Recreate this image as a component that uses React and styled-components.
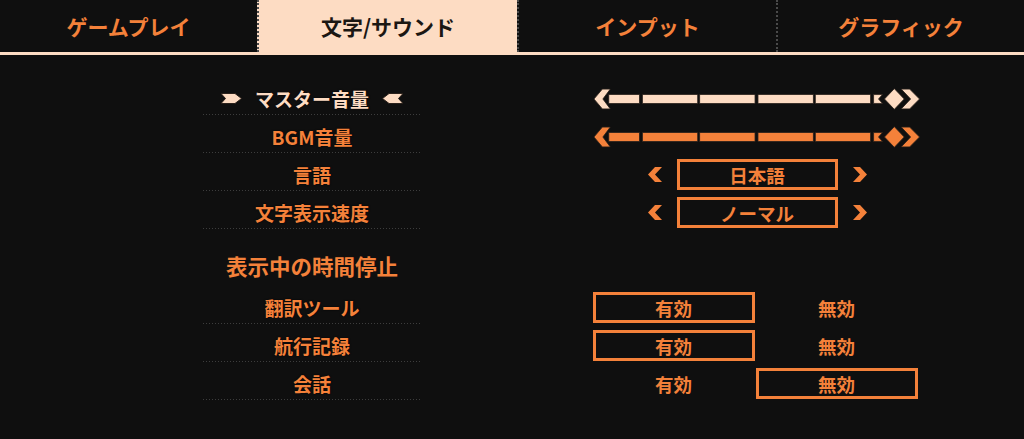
import React from "react";
import styled, { createGlobalStyle } from "styled-components";

const ORANGE = "#f4813a";
const PEACH = "#fddcc3";
const BG = "#0f0f0f";

const Global = createGlobalStyle`
  html, body { margin: 0; padding: 0; background: ${BG}; }
  body { font-family: "Noto Sans CJK JP", "Noto Sans", sans-serif; }
`;

const Page = styled.div`
  width: 1024px;
  height: 439px;
  background: ${BG};
  overflow: hidden;
`;

const TabBar = styled.div`
  display: grid;
  grid-template-columns: 257px 260px 259px 1fr;
  height: 52px;
  border-bottom: 3px solid ${PEACH};
`;

const Tab = styled.div`
  display: flex;
  align-items: center;
  justify-content: center;
  font-size: 21px;
  font-weight: 700;
  padding-bottom: 1px;
  color: ${(p) => (p.$active ? "#1b1713" : ORANGE)};
  background: ${(p) => (p.$active ? PEACH : "transparent")};
  border-left: ${(p) => (p.$first ? "none" : "2px dotted #4a4a4a")};
`;

const Content = styled.div`
  padding: 22px 0 0 203px;
`;

const Row = styled.div`
  display: grid;
  grid-template-columns: 218px 171px 330px;
  height: 38px;
`;

const Label = styled.div`
  box-sizing: border-box;
  height: 38px;
  padding-top: 5px;
  display: flex;
  align-items: center;
  justify-content: center;
  gap: 13px;
  font-size: 19px;
  font-weight: 700;
  color: ${(p) => (p.$selected ? PEACH : ORANGE)};
  text-shadow: 0 0 2px #000;
  background-image: linear-gradient(to right, #3d3d3d 1px, transparent 1px);
  background-size: 3px 1px;
  background-repeat: repeat-x;
  background-position: left bottom;
`;

const Header = styled.div`
  box-sizing: border-box;
  width: 218px;
  height: 57px;
  display: flex;
  align-items: flex-end;
  justify-content: center;
  padding-bottom: 5px;
  font-size: 21.5px;
  font-weight: 700;
  color: ${ORANGE};
`;

const Control = styled.div`
  grid-column: 3;
  box-sizing: border-box;
  height: 38px;
  padding-top: 5px;
  display: flex;
  align-items: center;
  justify-content: center;
`;

const Selector = styled.div`
  display: flex;
  align-items: center;
  gap: 14px;
`;

const ValueBox = styled.div`
  box-sizing: border-box;
  width: 161px;
  height: 31px;
  border: 3px solid ${ORANGE};
  display: flex;
  align-items: center;
  justify-content: center;
  font-size: 18.5px;
  font-weight: 700;
  color: ${ORANGE};
`;

const ToggleGroup = styled.div`
  display: grid;
  grid-template-columns: 162px 162px;
  gap: 1px;
  margin-left: -4px;
`;

const ToggleOption = styled.div`
  box-sizing: border-box;
  height: 31px;
  border: 3px solid ${(p) => (p.$on ? ORANGE : "transparent")};
  display: flex;
  align-items: center;
  justify-content: center;
  font-size: 18.5px;
  font-weight: 700;
  color: ${ORANGE};
`;

const Flag = ({ flip, color }) => (
  <svg width="21" height="11" viewBox="0 0 21 11" style={flip ? { transform: "scaleX(-1)" } : undefined}>
    <polygon points="0,0.5 14,0.5 20.5,5.5 14,10.5 0,10.5 4.5,5.5" fill={color} stroke="#2a211b" strokeWidth="1" />
  </svg>
);

const Chevron = ({ dir }) => (
  <svg width="16" height="17" viewBox="0 0 16 17">
    <polygon
      points={dir === "left" ? "1,8.5 8,1 15,1 8,8.5 15,16 8,16" : "15,8.5 8,1 1,1 8,8.5 1,16 8,16"}
      fill={ORANGE}
    />
  </svg>
);

const Slider = ({ color }) => {
  const s = "#2a211b";
  const segs = [
    [17, 48],
    [51, 107],
    [109, 165],
    [168, 224],
    [226, 282],
  ];
  return (
    <svg width="334" height="24" viewBox="0 0 334 24">
      <g fill={color} stroke={s} strokeWidth="0.8">
        <polygon points="2,12 10.5,2 18.5,2 11,12 18.5,22 10.5,22" />
        {segs.map(([a, b]) => (
          <rect key={a} x={a} y="7.5" width={b - a} height="9" />
        ))}
        <polygon points="285,7.5 294,7.5 290,12 294,16.5 285,16.5" />
        <polygon points="296,12 306,1.5 316,12 306,22.5" />
        <polygon points="313,2 321.5,2 331.5,12 321.5,22 313,22 322.5,12" />
      </g>
    </svg>
  );
};

const tabs = ["ゲームプレイ", "文字/サウンド", "インプット", "グラフィック"];

export default function App() {
  return (
    <Page>
      <Global />
      <TabBar>
        {tabs.map((t, i) => (
          <Tab key={t} $first={i === 0} $active={i === 1}>
            {t}
          </Tab>
        ))}
      </TabBar>
      <Content>
        <Row>
          <Label $selected>
            <Flag color={PEACH} />
            <span>マスター音量</span>
            <Flag color={PEACH} flip />
          </Label>
          <Control>
            <Slider color={PEACH} />
          </Control>
        </Row>
        <Row>
          <Label>BGM音量</Label>
          <Control>
            <Slider color={ORANGE} />
          </Control>
        </Row>
        <Row>
          <Label>言語</Label>
          <Control>
            <Selector>
              <Chevron dir="left" />
              <ValueBox>日本語</ValueBox>
              <Chevron dir="right" />
            </Selector>
          </Control>
        </Row>
        <Row>
          <Label>文字表示速度</Label>
          <Control>
            <Selector>
              <Chevron dir="left" />
              <ValueBox>ノーマル</ValueBox>
              <Chevron dir="right" />
            </Selector>
          </Control>
        </Row>
        <Header>表示中の時間停止</Header>
        {[
          ["翻訳ツール", true],
          ["航行記録", true],
          ["会話", false],
        ].map(([label, on]) => (
          <Row key={label}>
            <Label>{label}</Label>
            <Control>
              <ToggleGroup>
                <ToggleOption $on={on}>有効</ToggleOption>
                <ToggleOption $on={!on}>無効</ToggleOption>
              </ToggleGroup>
            </Control>
          </Row>
        ))}
      </Content>
    </Page>
  );
}
